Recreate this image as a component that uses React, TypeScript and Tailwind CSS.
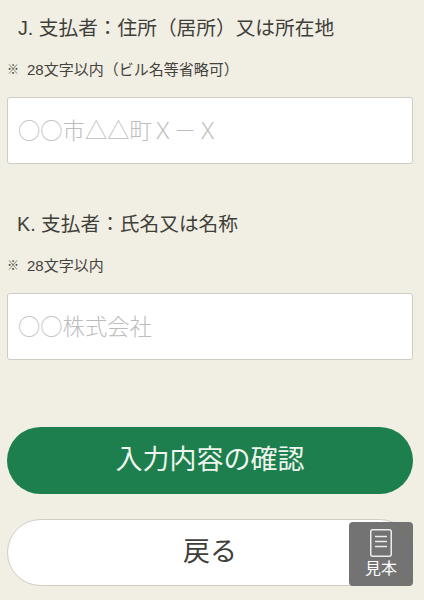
const font = "font-['Liberation_Sans','Noto_Sans_CJK_JP',sans-serif]"

function Field({ label, note, placeholder, indent }: { label: string; note: string; placeholder: string; indent: string }) {
  return (
    <div className="flex flex-col">
      <div className={`h-[28px] text-[19.7px] leading-[28px] text-[#3f3f3a] whitespace-nowrap ${indent}`}>{label}</div>
      <div className="mt-[14px] flex h-[28px] items-center text-[15px] leading-[28px] text-[#44423c]">
        <span className="w-[20px] text-[12px] font-bold">※</span>
        <span className="whitespace-nowrap">{note}</span>
      </div>
      <input
        readOnly
        placeholder={placeholder}
        className="mt-[13px] h-[67px] w-full rounded-[3px] border border-[#cfccc2] bg-white px-[10px] pb-[4px] font-['Noto_Sans_CJK_JP',sans-serif] text-[22.3px] font-light outline-none placeholder:text-[#bcbcbc]"
      />
    </div>
  )
}

export default function App() {
  return (
    <div lang="ja" className={`relative h-[600px] w-[424px] overflow-hidden bg-[#f1eee4] pl-[7px] pr-[11px] pt-[14px] ${font}`}>
      <div className="flex flex-col gap-[46px]">
        <Field label="J. 支払者：住所（居所）又は所在地" note="28文字以内（ビル名等省略可）" placeholder="○○市△△町Ｘ－Ｘ" indent="pl-[11px]" />
        <Field label="K. 支払者：氏名又は名称" note="28文字以内" placeholder="○○株式会社" indent="pl-[10px]" />
      </div>
      <button className="mt-[67px] flex h-[67px] w-full items-center justify-center rounded-full bg-[#1c7f4d] text-[27px] text-[#eef5ee]">
        入力内容の確認
      </button>
      <button className="mt-[25px] flex h-[67px] w-full items-center justify-center rounded-full border border-[#d2cdc2] bg-white text-[27px] text-[#3f3f3a]">
        戻る
      </button>
      <div className="absolute left-[349px] top-[522px] flex h-[64px] w-[64px] flex-col items-center rounded-[4px] bg-[#6b6b6b]/95 pt-[7px] text-white">
        <svg width="22" height="28" viewBox="0 0 22 28" fill="none" stroke="#ececec" strokeWidth="1.5">
          <rect x="0.75" y="0.75" width="20.5" height="26.5" rx="2" />
          <path d="M5 7.5h12M5 12.5h12M5 17.5h12" />
        </svg>
        <span className="mt-[2px] text-[16px] leading-[20px]">見本</span>
      </div>
    </div>
  )
}
